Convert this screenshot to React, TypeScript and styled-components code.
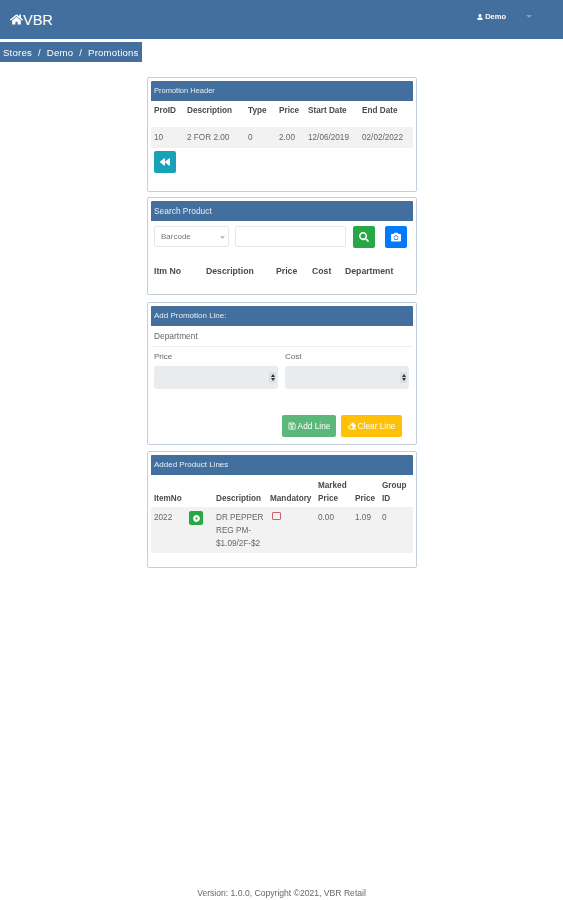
import React from "react";
import styled, { createGlobalStyle } from "styled-components";
import {
  FaBackward,
  FaCamera,
  FaEraser,
  FaHome,
  FaRegSave,
  FaSearch,
  FaUser,
  FaDotCircle,
} from "react-icons/fa";

const GlobalStyle = createGlobalStyle`
  html, body {
    margin: 0;
    padding: 0;
    background: #fff;
  }
  * {
    box-sizing: border-box;
  }
`;

const Page = styled.div`
  display: flex;
  flex-direction: column;
  height: 900px;
  overflow: hidden;
  font-family: "Liberation Sans", Arial, sans-serif;
  font-size: 8px;
  color: #555;
  filter: blur(0.6px);
`;

const Navbar = styled.header`
  display: flex;
  align-items: center;
  justify-content: space-between;
  flex: none;
  height: 39px;
  padding: 0 31px 0 10px;
  background: #426f9e;
  color: #fff;
`;

const Brand = styled.div`
  display: flex;
  align-items: center;
  font-size: 14.5px;
  line-height: 16px;
`;

const UserMenu = styled.div`
  display: flex;
  align-items: center;
  gap: 20px;
  margin-bottom: 6px;
  font-size: 7.5px;
  font-weight: 700;
`;

const UserName = styled.span`
  display: flex;
  align-items: center;
  gap: 2px;
`;

const Caret = styled.span`
  width: 0;
  height: 0;
  border-left: 3px solid transparent;
  border-right: 3px solid transparent;
  border-top: 3px solid #7f9fc2;
`;

const Breadcrumb = styled.nav`
  align-self: flex-start;
  display: flex;
  align-items: center;
  gap: 6px;
  height: 20px;
  margin: 3px 0 15px;
  padding: 0 3px;
  background: #426f9e;
  color: #fff;
  font-size: 9.6px;
  letter-spacing: 0.2px;
`;

const Content = styled.main`
  display: flex;
  flex-direction: column;
  width: 270px;
  margin-left: 147px;
`;

const Card = styled.section<{ $height: number; $gap: number }>`
  display: flex;
  flex-direction: column;
  height: ${(p) => p.$height}px;
  margin-bottom: ${(p) => p.$gap}px;
  padding: 3px;
  border: 1px solid #c3cfdd;
  border-radius: 2px;
`;

const CardHeader = styled.h2<{ $size?: number }>`
  display: flex;
  align-items: center;
  flex: none;
  height: 20px;
  margin: 0;
  padding: 0 3px 1px;
  background: #426f9e;
  border-radius: 1px 1px 0 0;
  color: #e8eef5;
  font-size: ${(p) => p.$size ?? 8}px;
  font-weight: 400;
`;

const Table = styled.table<{ $size?: number }>`
  width: 262px;
  table-layout: fixed;
  border-collapse: collapse;
  font-size: ${(p) => p.$size ?? 8.2}px;
`;

const Col = styled.col<{ $width: number }>`
  width: ${(p) => p.$width}px;
`;

const HeadCell = styled.th<{ $height: number }>`
  height: ${(p) => p.$height}px;
  padding: 0 3px;
  color: #4a4a4a;
  font-weight: 700;
  line-height: 13px;
  text-align: left;
  vertical-align: middle;
`;

const RaisedHeadCell = styled(HeadCell)`
  padding-bottom: 8px;
`;

const TallHeadCell = styled(HeadCell)`
  vertical-align: bottom;
  padding-bottom: 2px;
`;

const Row = styled.tr`
  background: #f2f2f2;
`;

const Cell = styled.td`
  height: 21px;
  padding: 0 3px;
  color: #666;
  line-height: 13px;
  vertical-align: middle;
`;

const TopCell = styled(Cell)`
  height: 46px;
  padding-top: 4px;
  vertical-align: top;
`;

const IconButton = styled.button<{ $color: string; $size?: number }>`
  display: flex;
  align-items: center;
  justify-content: center;
  flex: none;
  width: ${(p) => p.$size ?? 22}px;
  height: ${(p) => p.$size ?? 22}px;
  padding: 0;
  border: 0;
  border-radius: 2px;
  background: ${(p) => p.$color};
  color: #fff;
  font-size: 10px;
`;

const BackButton = styled(IconButton)`
  margin: 3px 0 0 3px;
`;

const SearchBar = styled.div`
  display: flex;
  align-items: center;
  height: 21px;
  margin: 5px 0 0 3px;
`;

const SelectBox = styled.div`
  display: flex;
  align-items: center;
  justify-content: space-between;
  width: 75px;
  height: 21px;
  margin-right: 6px;
  padding: 0 2px 0 6px;
  border: 1px solid #e6e8ea;
  border-radius: 2px;
  color: #777;
`;

const SelectArrow = styled.span`
  width: 3px;
  height: 3px;
  margin-right: 2px;
  border-right: 1px solid #999;
  border-bottom: 1px solid #999;
  transform: rotate(45deg);
`;

const TextBox = styled.div`
  width: 111px;
  height: 21px;
  margin-right: 7px;
  border: 1px solid #e6e8ea;
  border-radius: 2px;
`;

const SearchButton = styled(IconButton)`
  margin-right: 10px;
`;

const SearchHead = styled.div`
  margin-top: 13px;
`;

const DeptLine = styled.div`
  display: flex;
  align-items: center;
  height: 21px;
  padding: 0 3px;
  border-bottom: 1px solid #eee;
  color: #666;
  font-size: 8.4px;
`;

const FieldRow = styled.div`
  display: flex;
  gap: 7px;
  margin: 4px 0 0 3px;
`;

const Field = styled.div<{ $width: number }>`
  display: flex;
  flex-direction: column;
  width: ${(p) => p.$width}px;
`;

const FieldLabel = styled.label`
  height: 15px;
  color: #666;
  font-size: 8px;
  line-height: 12px;
`;

const NumberBox = styled.div`
  display: flex;
  align-items: center;
  justify-content: flex-end;
  height: 23px;
  padding-right: 2px;
  border-radius: 3px;
  background: #e9ecef;
`;

const Spinner = styled.div`
  display: flex;
  flex-direction: column;
  align-items: center;
  justify-content: center;
  gap: 1px;
  width: 7px;
  height: 11px;
  background: #dcdfe2;
`;

const SpinArrow = styled.span<{ $up?: boolean }>`
  width: 0;
  height: 0;
  border-left: 2px solid transparent;
  border-right: 2px solid transparent;
  ${(p) => (p.$up ? "border-bottom: 3px solid #333;" : "border-top: 3px solid #333;")}
`;

const Actions = styled.div`
  display: flex;
  justify-content: flex-end;
  gap: 5px;
  margin: 26px 11px 0 0;
`;

const ActionButton = styled.button<{ $color: string; $width: number }>`
  display: flex;
  align-items: center;
  justify-content: center;
  gap: 2px;
  width: ${(p) => p.$width}px;
  height: 22px;
  padding: 0;
  border: 0;
  border-radius: 2px;
  background: ${(p) => p.$color};
  color: #fff;
  font-family: inherit;
  font-size: 8.3px;
`;

const CheckMark = styled.span`
  display: block;
  width: 9px;
  height: 8px;
  margin: 1px 0 0 2px;
  border: 1px solid #d0606a;
  border-radius: 1px;
`;

const Footer = styled.footer`
  margin-top: auto;
  height: 12px;
  margin-bottom: 1px;
  color: #666;
  font-size: 8.6px;
  line-height: 12px;
  text-align: center;
`;

const App = () => {
  return (
    <Page>
      <GlobalStyle />
      <Navbar>
        <Brand>
          <FaHome size={13} />
          VBR
        </Brand>
        <UserMenu>
          <UserName>
            <FaUser size={6} />
            Demo
          </UserName>
          <Caret />
        </UserMenu>
      </Navbar>
      <Breadcrumb>
        <span>Stores</span>
        <span>/</span>
        <span>Demo</span>
        <span>/</span>
        <span>Promotions</span>
      </Breadcrumb>

      <Content>
        <Card $height={115} $gap={5}>
          <CardHeader $size={7.5}>Promotion Header</CardHeader>
          <Table>
            <colgroup>
              <Col $width={33} />
              <Col $width={61} />
              <Col $width={31} />
              <Col $width={29} />
              <Col $width={54} />
              <Col $width={54} />
            </colgroup>
            <thead>
              <tr>
                {["ProID", "Description", "Type", "Price", "Start Date", "End Date"].map((h) => (
                  <RaisedHeadCell key={h} $height={26}>
                    {h}
                  </RaisedHeadCell>
                ))}
              </tr>
            </thead>
            <tbody>
              <Row>
                {["10", "2 FOR 2.00", "0", "2.00", "12/06/2019", "02/02/2022"].map((c) => (
                  <Cell key={c}>{c}</Cell>
                ))}
              </Row>
            </tbody>
          </Table>
          <BackButton $color="#17a2b8">
            <FaBackward />
          </BackButton>
        </Card>

        <Card $height={98} $gap={7}>
          <CardHeader $size={8.4}>Search Product</CardHeader>
          <SearchBar>
            <SelectBox>
              Barcode
              <SelectArrow />
            </SelectBox>
            <TextBox />
            <SearchButton $color="#28a745">
              <FaSearch />
            </SearchButton>
            <IconButton $color="#007bff">
              <FaCamera />
            </IconButton>
          </SearchBar>
          <SearchHead>
            <Table $size={8.7}>
              <colgroup>
                <Col $width={52} />
                <Col $width={70} />
                <Col $width={36} />
                <Col $width={33} />
                <Col $width={71} />
              </colgroup>
              <thead>
                <tr>
                  {["Itm No", "Description", "Price", "Cost", "Department"].map((h) => (
                    <HeadCell key={h} $height={22}>
                      {h}
                    </HeadCell>
                  ))}
                </tr>
              </thead>
            </Table>
          </SearchHead>
        </Card>

        <Card $height={143} $gap={6}>
          <CardHeader>Add Promotion Line:</CardHeader>
          <DeptLine>Department</DeptLine>
          <FieldRow>
            <Field $width={124}>
              <FieldLabel>Price</FieldLabel>
              <NumberBox>
                <Spinner>
                  <SpinArrow $up />
                  <SpinArrow />
                </Spinner>
              </NumberBox>
            </Field>
            <Field $width={124}>
              <FieldLabel>Cost</FieldLabel>
              <NumberBox>
                <Spinner>
                  <SpinArrow $up />
                  <SpinArrow />
                </Spinner>
              </NumberBox>
            </Field>
          </FieldRow>
          <Actions>
            <ActionButton $color="#5cb87a" $width={54}>
              <FaRegSave size={8} />
              Add Line
            </ActionButton>
            <ActionButton $color="#ffc107" $width={61}>
              <FaEraser size={8} />
              Clear Line
            </ActionButton>
          </Actions>
        </Card>

        <Card $height={117} $gap={0}>
          <CardHeader>Added Product Lines</CardHeader>
          <Table>
            <colgroup>
              <Col $width={35} />
              <Col $width={27} />
              <Col $width={54} />
              <Col $width={48} />
              <Col $width={37} />
              <Col $width={27} />
              <Col $width={34} />
            </colgroup>
            <thead>
              <tr>
                <TallHeadCell $height={32}>ItemNo</TallHeadCell>
                <TallHeadCell $height={32} />
                <TallHeadCell $height={32}>Description</TallHeadCell>
                <TallHeadCell $height={32}>Mandatory</TallHeadCell>
                <TallHeadCell $height={32}>Marked Price</TallHeadCell>
                <TallHeadCell $height={32}>Price</TallHeadCell>
                <TallHeadCell $height={32}>Group ID</TallHeadCell>
              </tr>
            </thead>
            <tbody>
              <Row>
                <TopCell>2022</TopCell>
                <TopCell>
                  <IconButton $color="#28a745" $size={14}>
                    <FaDotCircle size={7} />
                  </IconButton>
                </TopCell>
                <TopCell>DR PEPPER REG PM- $1.09/2F-$2</TopCell>
                <TopCell>
                  <CheckMark />
                </TopCell>
                <TopCell>0.00</TopCell>
                <TopCell>1.09</TopCell>
                <TopCell>0</TopCell>
              </Row>
            </tbody>
          </Table>
        </Card>
      </Content>

      <Footer>Version: 1.0.0, Copyright ©2021, VBR Retail</Footer>
    </Page>
  );
};

export default App;
